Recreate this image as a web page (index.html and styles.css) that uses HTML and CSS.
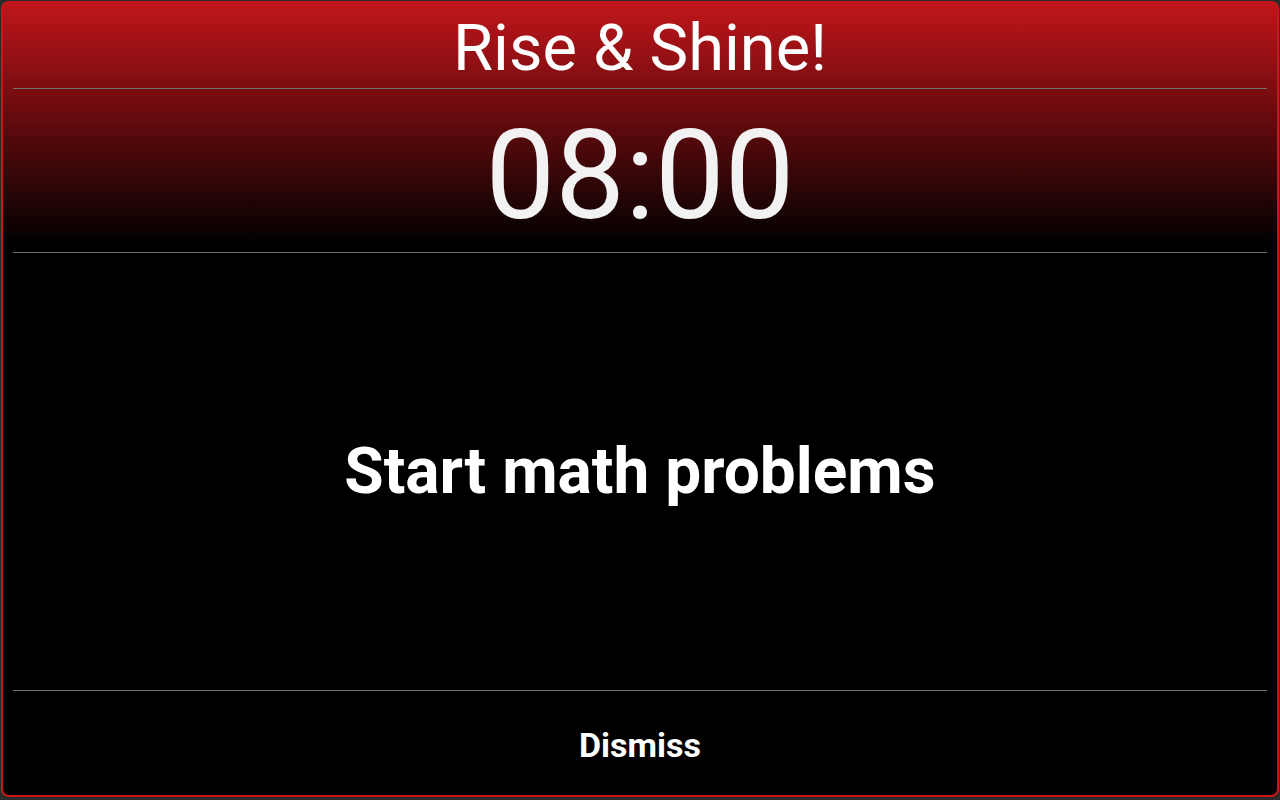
FILE: index.html
```html
<!DOCTYPE html>
<html>
<head>
<meta charset="utf-8">
<link rel="stylesheet" href="styles.css">
</head>
<body>
<div class="panel">
  <div class="head">
    <div class="title">Rise &amp; Shine!</div>
    <div class="rule"></div>
    <div class="time">08:00</div>
  </div>
  <div class="rule"></div>
  <div class="main">Start math problems</div>
  <div class="rule"></div>
  <div class="foot">Dismiss</div>
</div>
</body>
</html>
```
FILE: styles.css
```css
html, body {
  margin: 0;
  padding: 0;
  height: 100%;
  background: #2b2b2b;
}
body {
  padding: 1px 1px 3px 1px;
  box-sizing: border-box;
  font-family: Roboto, "Noto Sans", sans-serif;
  color: #fff;
}
.panel {
  height: 100%;
  box-sizing: border-box;
  border: 2px solid #c8161b;
  border-top: none;
  border-radius: 8px;
  background: linear-gradient(to bottom, #c1161a 0px, #6a0b0e 110px, #2a0506 190px, #000 245px, #000 100%);
  display: flex;
  flex-direction: column;
  padding: 0 10px;
  overflow: hidden;
}
.head {
  display: flex;
  flex-direction: column;
}
.title {
  height: 87px;
  display: flex;
  align-items: center;
  justify-content: center;
  font-size: 65px;
  padding-top: 6px;
  box-sizing: border-box;
}
.rule {
  height: 1px;
  background: #707070;
  flex: none;
}
.time {
  height: 163px;
  display: flex;
  align-items: center;
  justify-content: center;
  font-size: 124px;
  color: #f2f2f2;
  padding-top: 10px;
  box-sizing: border-box;
}
.main {
  height: 437px;
  display: flex;
  align-items: center;
  justify-content: center;
  font-size: 64px;
  font-weight: bold;
}
.foot {
  flex: 1;
  display: flex;
  align-items: center;
  justify-content: center;
  font-size: 34px;
  font-weight: bold;
  padding-top: 4px;
}
```
